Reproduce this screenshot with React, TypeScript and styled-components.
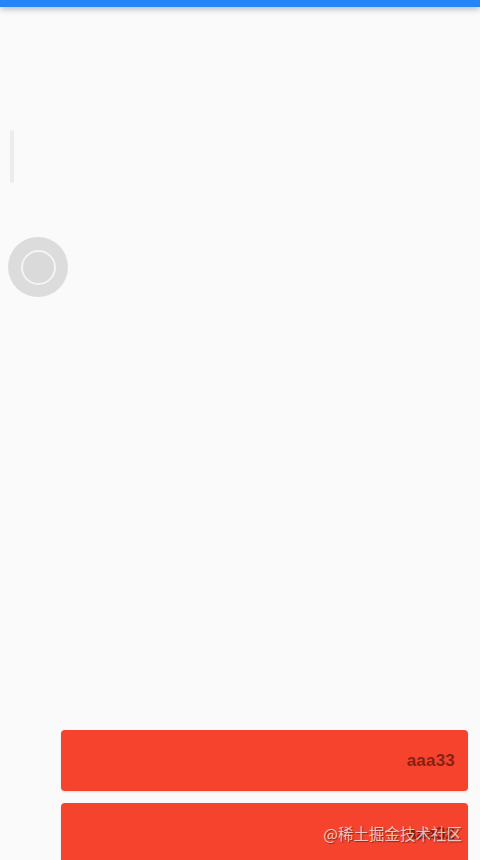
import styled, { createGlobalStyle } from "styled-components";

const GlobalStyle = createGlobalStyle`
  html, body {
    margin: 0;
    padding: 0;
    background: #fafafa;
    font-family: Roboto, "Liberation Sans", "Noto Sans CJK SC", sans-serif;
  }
`;

const Screen = styled.div`
  position: relative;
  width: 480px;
  height: 860px;
  overflow: hidden;
  background: #fafafa;
  display: flex;
  flex-direction: column;
`;

const StatusBar = styled.div`
  height: 7px;
  flex-shrink: 0;
  background: #2585f6;
  box-shadow: 0 2px 6px rgba(0, 0, 0, 0.28);
  position: relative;
  z-index: 1;
`;

const Body = styled.div`
  display: flex;
  flex-direction: column;
  flex: 1;
`;

const DragTrack = styled.div`
  margin: 123px 0 0 10px;
  width: 4px;
  height: 53px;
  border-radius: 2px;
  background: #ececec;
`;

const Spinner = styled.div`
  margin: 54px 0 0 8px;
  width: 60px;
  height: 60px;
  border-radius: 50%;
  background: #dcdcdc;
  display: flex;
  align-items: center;
  justify-content: center;
`;

const SpinnerRing = styled.div`
  width: 31px;
  height: 31px;
  border-radius: 50%;
  border: 2px solid #f4f4f4;
  background: #dadada;
`;

const List = styled.div`
  margin-top: 433px;
  padding: 0 12px 0 61px;
  display: flex;
  flex-direction: column;
  gap: 12px;
`;

const Card = styled.div`
  height: 61px;
  flex-shrink: 0;
  border-radius: 4px;
  background: #f5432e;
  box-shadow: 0 1px 2px rgba(0, 0, 0, 0.12);
  display: flex;
  align-items: center;
  justify-content: flex-end;
  padding-right: 13px;
`;

const CardLabel = styled.span`
  font-family: "Liberation Sans", Arial, sans-serif;
  font-size: 17px;
  font-weight: bold;
  color: rgba(60, 10, 5, 0.62);
  letter-spacing: 0.2px;
`;

const Watermark = styled.div`
  position: absolute;
  right: 18px;
  bottom: 16px;
  font-family: "Noto Sans CJK SC", "Noto Sans", sans-serif;
  font-size: 15.5px;
  color: rgba(255, 235, 230, 0.78);
  text-shadow: 1px 1px 1px rgba(60, 20, 10, 0.55);
`;

const items = ["aaa33", "aaa32"];

export default function App() {
  return (
    <>
      <GlobalStyle />
      <Screen>
        <StatusBar />
        <Body>
          <DragTrack />
          <Spinner>
            <SpinnerRing />
          </Spinner>
          <List>
            {items.map((label) => (
              <Card key={label}>
                <CardLabel>{label}</CardLabel>
              </Card>
            ))}
          </List>
        </Body>
        <Watermark>@稀土掘金技术社区</Watermark>
      </Screen>
    </>
  );
}
